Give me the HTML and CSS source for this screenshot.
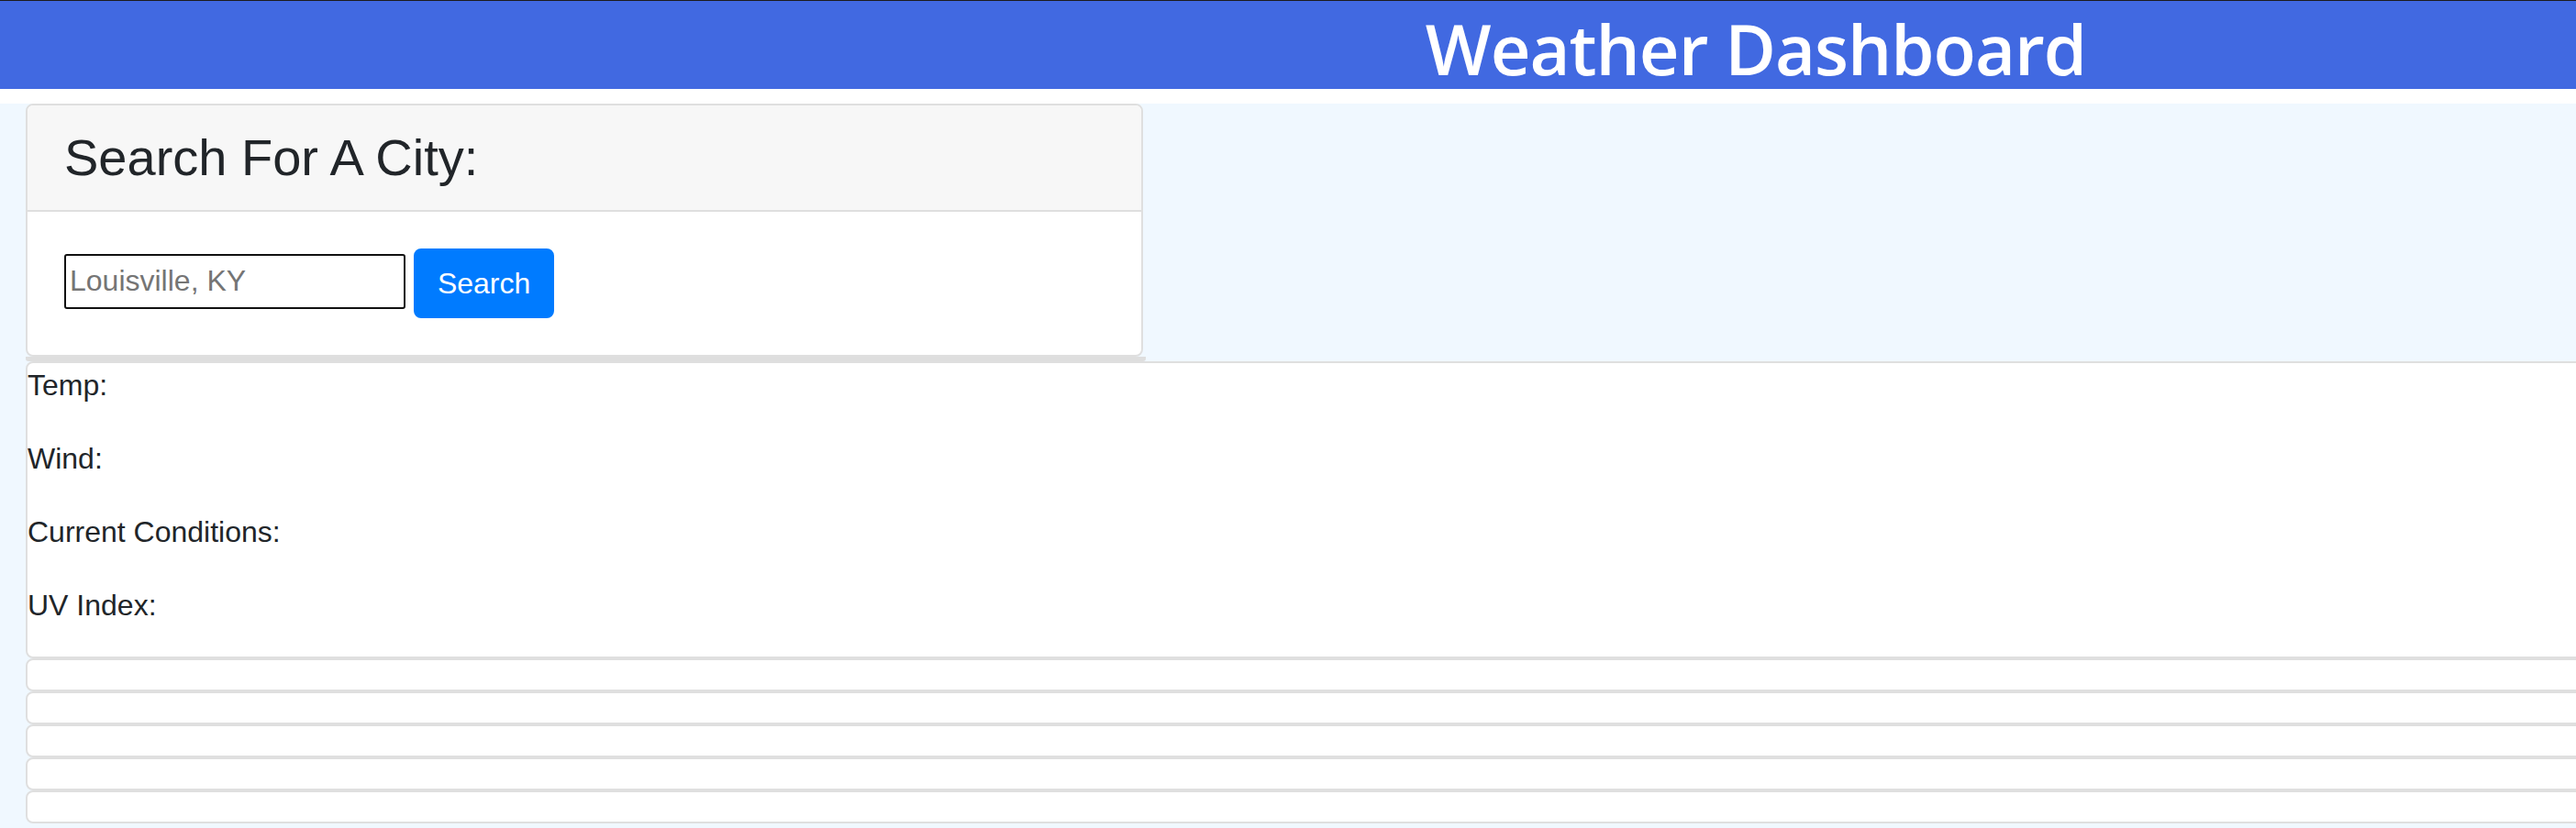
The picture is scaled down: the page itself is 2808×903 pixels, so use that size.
FILE: index.html
```html
<!DOCTYPE html>
<html lang="en">
<head>
<meta charset="utf-8">
<title>Weather Dashboard</title>
<link rel="stylesheet" href="styles.css">
</head>
<body>
<div class="page">
  <header class="masthead">
    <h1 class="title">Weather Dashboard</h1>
  </header>
  <main class="content">
    <div class="search-col">
      <section class="card search-card">
        <div class="card-header">
          <h3 class="search-title">Search For A City:</h3>
        </div>
        <div class="card-body">
          <input class="city-input" type="text" placeholder="Louisville, KY"> <button class="btn" type="button">Search</button>
        </div>
      </section>
      <div class="history"></div>
    </div>
    <section class="card current">
      <p class="stat">Temp:</p>
      <p class="stat">Wind:</p>
      <p class="stat">Current Conditions:</p>
      <p class="stat">UV Index:</p>
    </section>
    <div class="forecast">
      <div class="card day"></div>
      <div class="card day"></div>
      <div class="card day"></div>
      <div class="card day"></div>
      <div class="card day"></div>
    </div>
  </main>
</div>
</body>
</html>
```
FILE: styles.css
```css
html, body {
  overflow: hidden;
}
body {
  margin: 0;
  border-top: 1px solid #1c1c1c;
  background: #ffffff;
  color: #212529;
  font-family: "Liberation Sans", Arial, sans-serif;
  font-size: 32px;
  line-height: 1.5;
}
.page {
  width: 3828px;
}
.masthead {
  display: flex;
  justify-content: center;
  align-items: flex-start;
  height: 96px;
  background: #4169e1;
  margin-bottom: 16px;
}
.title {
  margin: 0;
  color: #ffffff;
  font-family: "Open Sans", "Noto Sans", sans-serif;
  font-weight: 600;
  font-size: 76px;
  line-height: normal;
  letter-spacing: -1px;
  white-space: nowrap;
}
.content {
  position: relative;
  background: #f0f8ff;
  padding-left: 28px;
  min-height: 790px;
}
.search-col {
  width: 1218px;
}
.card {
  box-sizing: border-box;
  background: #ffffff;
  border: 2px solid #dfdfdf;
  border-radius: 8px;
  overflow: hidden;
}
.search-card {
  width: 1218px;
}
.card-header {
  background: #f7f7f7;
  border-bottom: 2px solid #dfdfdf;
  padding: 24px 40px;
}
.search-title {
  margin: 0;
  font-family: "Liberation Sans", Arial, sans-serif;
  font-weight: 400;
  font-size: 56px;
  line-height: 66px;
}
.card-body {
  padding: 40px;
}
.city-input {
  box-sizing: border-box;
  width: 372px;
  height: 60px;
  padding: 0 4px;
  border: 2px solid #111111;
  border-radius: 3px;
  font-family: "Liberation Sans", Arial, sans-serif;
  font-size: 32px;
  color: #212529;
  background: #ffffff;
  vertical-align: 3px;
}
.city-input::placeholder {
  color: #757575;
}
.btn {
  display: inline-block;
  padding: 12px 24px;
  border: 2px solid #007bff;
  border-radius: 8px;
  background: #007bff;
  color: #ffffff;
  font-family: "Liberation Sans", Arial, sans-serif;
  font-size: 32px;
  line-height: 1.5;
}
.history {
  width: 1221px;
  height: 5px;
  background: #dedede;
  border-radius: 0 0 3px 3px;
}
.current {
  width: 3772px;
}
.stat {
  margin: 0 0 32px;
}
.forecast {
  width: 3772px;
}
.day {
  height: 36px;
}
```
